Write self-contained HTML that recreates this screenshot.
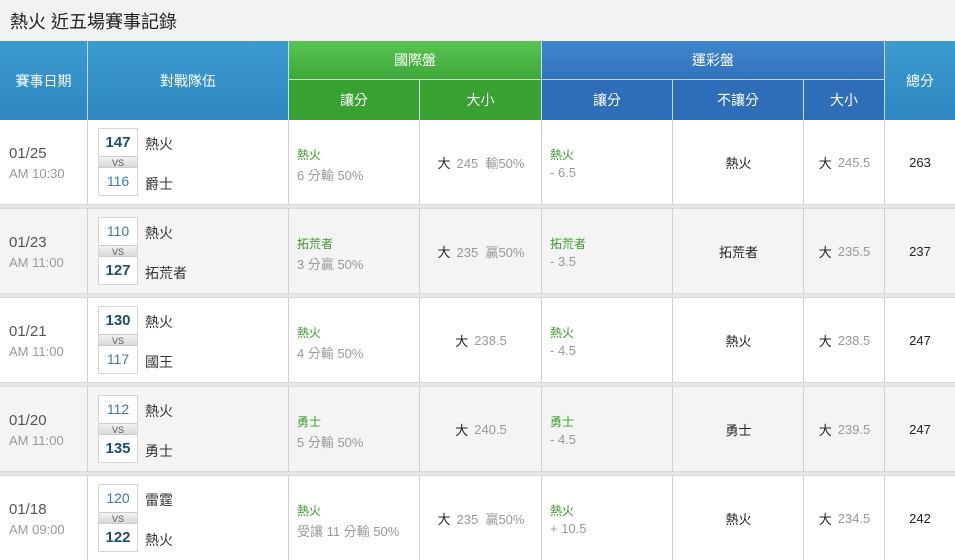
<!DOCTYPE html>
<html><head><meta charset="utf-8"><style>
*{margin:0;padding:0;box-sizing:border-box}
body{width:955px;height:560px;overflow:hidden;background:#fff;font-family:"Liberation Sans","Noto Sans CJK TC",sans-serif;position:relative}
.a{position:absolute}
.title{left:0;top:0;width:955px;height:41px;background:#f2f2f2;font-size:18px;color:#222;padding:8px 0 0 10px}
.h{color:#fff;font-size:14px;display:flex;align-items:center;justify-content:center;border-right:1px solid #bfe0f0}
.bl{background:linear-gradient(#3c9bd0,#2f86c0)}
.gr{background:linear-gradient(#58c450,#3ea83a)}
.gr2{background:#39a032}
.db{background:linear-gradient(#3f86cc,#3272bd)}
.db2{background:#2f6db8}
.row{left:0;width:955px;height:84px}
.gap{left:0;width:955px;height:5px;background:#e6e6e6;border-top:1px solid #dadada;border-bottom:1px solid #dadada}
.c{position:absolute;top:0;height:84px;border-right:1px solid #d0d0d0}
.date{left:9px;top:25px;font-size:15px;color:#555;position:absolute}
.time{left:9px;top:46px;font-size:13px;color:#999;position:absolute}
.sb{position:absolute;left:98px;width:40px;height:68px;top:8px;border:1px solid #d6d6d6;background:#fff}
.sc{height:27px;text-align:center;line-height:27px;font-size:14px;color:#3a7ca5}
.sc.w{font-weight:bold;font-size:15px;color:#1d4f6e}
.vs{height:12px;background:linear-gradient(#f2f2f2,#d8d8d8);font-size:9px;text-align:center;line-height:12px;color:#555;border-top:1px solid #ccc;border-bottom:1px solid #ccc}
.tn{position:absolute;left:145px;font-size:14px;color:#333}
.g{position:absolute;font-size:12px;color:#3a9a2a;top:26px}
.s{position:absolute;font-size:13px;color:#999;top:45px}
.ctr{display:flex;align-items:center;justify-content:center;font-size:13px;color:#999}
.ctr b{font-weight:normal;color:#222;margin-right:6px}
.bk{color:#222;font-size:13px}
</style></head><body>
<div class="a title">熱火 近五場賽事記錄</div>
<div class="a h bl" style="left:0;top:41px;width:88px;height:79px">賽事日期</div>
<div class="a h bl" style="left:88px;top:41px;width:201px;height:79px">對戰隊伍</div>
<div class="a h gr" style="left:289px;top:41px;width:253px;height:39px;border-bottom:1px solid #bfe6bf">國際盤</div>
<div class="a h gr2" style="left:289px;top:80px;width:131px;height:40px">讓分</div>
<div class="a h gr2" style="left:420px;top:80px;width:122px;height:40px">大小</div>
<div class="a h db" style="left:542px;top:41px;width:343px;height:39px;border-bottom:1px solid #bcd6f0">運彩盤</div>
<div class="a h db2" style="left:542px;top:80px;width:131px;height:40px">讓分</div>
<div class="a h db2" style="left:673px;top:80px;width:131px;height:40px">不讓分</div>
<div class="a h db2" style="left:804px;top:80px;width:81px;height:40px">大小</div>
<div class="a h bl" style="left:885px;top:41px;width:70px;height:79px;border-right:none">總分</div>

<!-- rows -->
<div class="a row" style="top:120px;background:#fff">
<div class="c" style="left:0;width:88px"></div><div class="c" style="left:88px;width:201px"></div><div class="c" style="left:289px;width:131px"></div><div class="c" style="left:420px;width:122px"></div><div class="c" style="left:542px;width:131px"></div><div class="c" style="left:673px;width:131px"></div><div class="c" style="left:804px;width:81px"></div>
<div class="date">01/25</div><div class="time">AM 10:30</div>
<div class="sb"><div class="sc w">147</div><div class="vs">VS</div><div class="sc">116</div></div>
<div class="tn" style="top:14px">熱火</div><div class="tn" style="top:54px">爵士</div>
<div class="g" style="left:297px">熱火</div><div class="s" style="left:297px">6 分輸 50%</div>
<div class="c ctr" style="left:420px;width:122px;border:none"><b>大</b>245&nbsp;&nbsp;輸50%</div>
<div class="g" style="left:550px">熱火</div><div class="s" style="left:550px">- 6.5</div>
<div class="c ctr bk" style="left:673px;width:131px;border:none">熱火</div>
<div class="c ctr" style="left:804px;width:81px;border:none"><b>大</b>245.5</div>
<div class="c ctr bk" style="left:885px;width:70px;border:none">263</div>
</div>
<div class="a gap" style="top:204px"></div>

<div class="a row" style="top:209px;background:#f4f4f4">
<div class="c" style="left:0;width:88px"></div><div class="c" style="left:88px;width:201px"></div><div class="c" style="left:289px;width:131px"></div><div class="c" style="left:420px;width:122px"></div><div class="c" style="left:542px;width:131px"></div><div class="c" style="left:673px;width:131px"></div><div class="c" style="left:804px;width:81px"></div>
<div class="date">01/23</div><div class="time">AM 11:00</div>
<div class="sb"><div class="sc">110</div><div class="vs">VS</div><div class="sc w">127</div></div>
<div class="tn" style="top:14px">熱火</div><div class="tn" style="top:54px">拓荒者</div>
<div class="g" style="left:297px">拓荒者</div><div class="s" style="left:297px">3 分贏 50%</div>
<div class="c ctr" style="left:420px;width:122px;border:none"><b>大</b>235&nbsp;&nbsp;贏50%</div>
<div class="g" style="left:550px">拓荒者</div><div class="s" style="left:550px">- 3.5</div>
<div class="c ctr bk" style="left:673px;width:131px;border:none">拓荒者</div>
<div class="c ctr" style="left:804px;width:81px;border:none"><b>大</b>235.5</div>
<div class="c ctr bk" style="left:885px;width:70px;border:none">237</div>
</div>
<div class="a gap" style="top:293px"></div>

<div class="a row" style="top:298px;background:#fff">
<div class="c" style="left:0;width:88px"></div><div class="c" style="left:88px;width:201px"></div><div class="c" style="left:289px;width:131px"></div><div class="c" style="left:420px;width:122px"></div><div class="c" style="left:542px;width:131px"></div><div class="c" style="left:673px;width:131px"></div><div class="c" style="left:804px;width:81px"></div>
<div class="date">01/21</div><div class="time">AM 11:00</div>
<div class="sb"><div class="sc w">130</div><div class="vs">VS</div><div class="sc">117</div></div>
<div class="tn" style="top:14px">熱火</div><div class="tn" style="top:54px">國王</div>
<div class="g" style="left:297px">熱火</div><div class="s" style="left:297px">4 分輸 50%</div>
<div class="c ctr" style="left:420px;width:122px;border:none"><b>大</b>238.5</div>
<div class="g" style="left:550px">熱火</div><div class="s" style="left:550px">- 4.5</div>
<div class="c ctr bk" style="left:673px;width:131px;border:none">熱火</div>
<div class="c ctr" style="left:804px;width:81px;border:none"><b>大</b>238.5</div>
<div class="c ctr bk" style="left:885px;width:70px;border:none">247</div>
</div>
<div class="a gap" style="top:382px"></div>

<div class="a row" style="top:387px;background:#f4f4f4">
<div class="c" style="left:0;width:88px"></div><div class="c" style="left:88px;width:201px"></div><div class="c" style="left:289px;width:131px"></div><div class="c" style="left:420px;width:122px"></div><div class="c" style="left:542px;width:131px"></div><div class="c" style="left:673px;width:131px"></div><div class="c" style="left:804px;width:81px"></div>
<div class="date">01/20</div><div class="time">AM 11:00</div>
<div class="sb"><div class="sc">112</div><div class="vs">VS</div><div class="sc w">135</div></div>
<div class="tn" style="top:14px">熱火</div><div class="tn" style="top:54px">勇士</div>
<div class="g" style="left:297px">勇士</div><div class="s" style="left:297px">5 分輸 50%</div>
<div class="c ctr" style="left:420px;width:122px;border:none"><b>大</b>240.5</div>
<div class="g" style="left:550px">勇士</div><div class="s" style="left:550px">- 4.5</div>
<div class="c ctr bk" style="left:673px;width:131px;border:none">勇士</div>
<div class="c ctr" style="left:804px;width:81px;border:none"><b>大</b>239.5</div>
<div class="c ctr bk" style="left:885px;width:70px;border:none">247</div>
</div>
<div class="a gap" style="top:471px"></div>

<div class="a row" style="top:476px;background:#fff">
<div class="c" style="left:0;width:88px"></div><div class="c" style="left:88px;width:201px"></div><div class="c" style="left:289px;width:131px"></div><div class="c" style="left:420px;width:122px"></div><div class="c" style="left:542px;width:131px"></div><div class="c" style="left:673px;width:131px"></div><div class="c" style="left:804px;width:81px"></div>
<div class="date">01/18</div><div class="time">AM 09:00</div>
<div class="sb"><div class="sc">120</div><div class="vs">VS</div><div class="sc w">122</div></div>
<div class="tn" style="top:14px">雷霆</div><div class="tn" style="top:54px">熱火</div>
<div class="g" style="left:297px">熱火</div><div class="s" style="left:297px">受讓 11 分輸 50%</div>
<div class="c ctr" style="left:420px;width:122px;border:none"><b>大</b>235&nbsp;&nbsp;贏50%</div>
<div class="g" style="left:550px">熱火</div><div class="s" style="left:550px">+ 10.5</div>
<div class="c ctr bk" style="left:673px;width:131px;border:none">熱火</div>
<div class="c ctr" style="left:804px;width:81px;border:none"><b>大</b>234.5</div>
<div class="c ctr bk" style="left:885px;width:70px;border:none">242</div>
</div>
</body></html>
